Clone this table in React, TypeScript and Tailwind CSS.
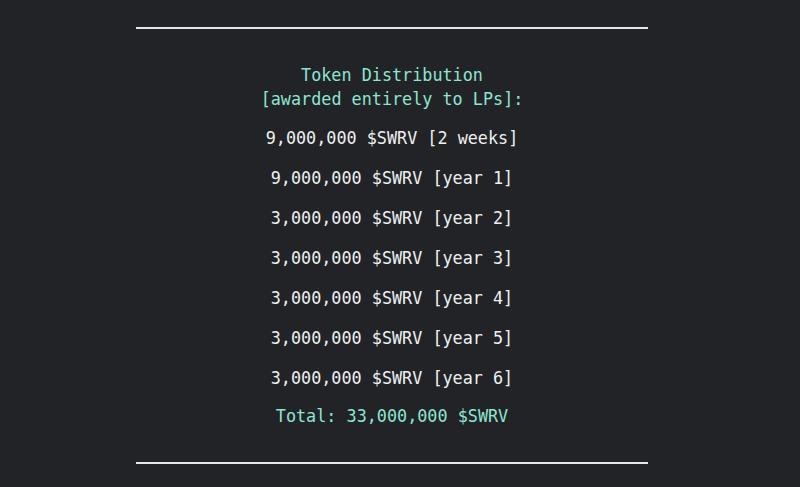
import React from "react";

const rows = [
  "9,000,000 $SWRV [2 weeks]",
  "9,000,000 $SWRV [year 1]",
  "3,000,000 $SWRV [year 2]",
  "3,000,000 $SWRV [year 3]",
  "3,000,000 $SWRV [year 4]",
  "3,000,000 $SWRV [year 5]",
  "3,000,000 $SWRV [year 6]",
];

export default function App() {
  return (
    <div className="w-[800px] h-[487px] bg-[#212327] overflow-hidden pt-[27px] font-['DejaVu_Sans_Mono',monospace] text-[16.8px] leading-6">
      <div className="w-[512px] ml-[136px]">
        <div className="h-[2px] bg-[#e6e6e6]" />
        <div className="mt-[34px] flex flex-col items-center text-[#8fe3d1]">
          <div>Token Distribution</div>
          <div>[awarded entirely to LPs]:</div>
        </div>
        <div className="mt-[15px] flex flex-col items-center gap-4 text-[#eef0f0]">
          {rows.map((r) => (
            <div key={r} className="whitespace-pre">{r}</div>
          ))}
        </div>
        <div className="mt-[14px] flex flex-col items-center text-[#8fe3d1]">
          <div>Total: 33,000,000 $SWRV</div>
        </div>
        <div className="mt-[34px] h-[2px] bg-[#e6e6e6]" />
      </div>
    </div>
  );
}
